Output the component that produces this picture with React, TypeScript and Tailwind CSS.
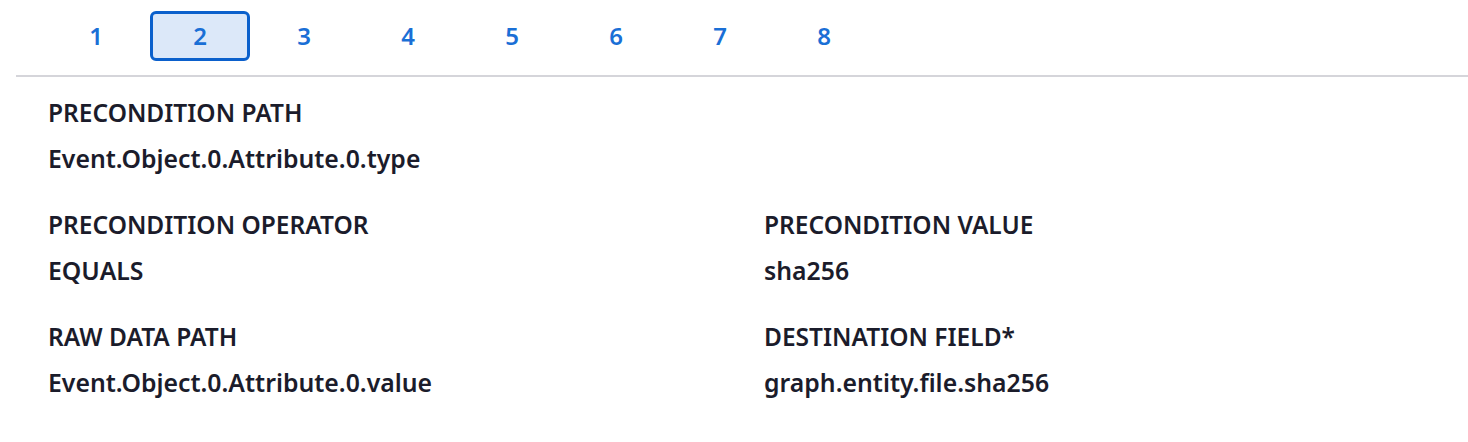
const tabs = ["1", "2", "3", "4", "5", "6", "7", "8"];

const fields = [
  { label: "PRECONDITION PATH", value: "Event.Object.0.Attribute.0.type", full: true },
  { label: "PRECONDITION OPERATOR", value: "EQUALS" },
  { label: "PRECONDITION VALUE", value: "sha256" },
  { label: "RAW DATA PATH", value: "Event.Object.0.Attribute.0.value" },
  { label: "DESTINATION FIELD*", value: "graph.entity.file.sha256" },
];

function Field({ label, value }: { label: string; value: string }) {
  return (
    <div className="flex flex-col gap-[17px]">
      <div className="text-[24.5px] leading-[28px] font-semibold text-[#1b1c2b]">{label}</div>
      <div className="text-[24.8px] leading-[28px] font-semibold text-[#1b1c2b]">{value}</div>
    </div>
  );
}

export default function App() {
  return (
    <div
      className="w-full h-[442px] bg-white overflow-hidden"
      style={{ fontFamily: '"Noto Sans", "Open Sans", sans-serif' }}
    >
      <div className="pl-4">
        <div className="flex gap-1 pl-[30px] pt-[11px] pb-[14px] border-b-2 border-[#d5d5da]">
          {tabs.map((t) => (
            <button
              key={t}
              className={
                t === "2"
                  ? "w-[100px] h-[50px] flex items-center justify-center rounded-md border-[3px] border-[#0b60cc] bg-[#dce8f9] text-[24px] font-semibold text-[#1a6fd6]"
                  : "w-[100px] h-[50px] flex items-center justify-center rounded-md border-[3px] border-transparent text-[24px] font-semibold text-[#1a6fd6]"
              }
            >
              {t}
            </button>
          ))}
        </div>
      </div>
      <div className="grid grid-cols-2 gap-x-[60px] gap-y-[39px] px-12 pt-[22px]">
        {fields.map((f) => (
          <div key={f.label} className={f.full ? "col-span-2" : ""}>
            <Field label={f.label} value={f.value} />
          </div>
        ))}
      </div>
    </div>
  );
}
